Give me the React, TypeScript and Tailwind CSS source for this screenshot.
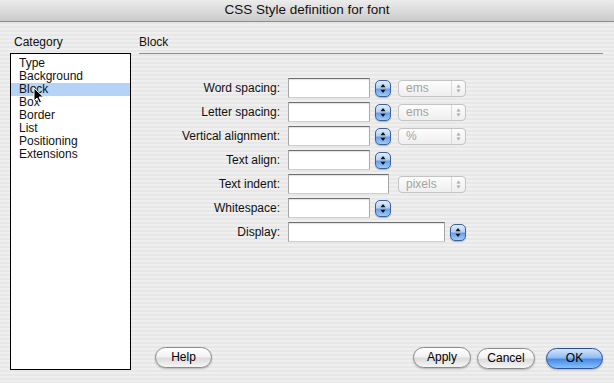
const font = "font-['Liberation_Sans',Arial,sans-serif]";

function Stepper() {
  return (
    <div className="flex h-[17px] w-[16px] items-center justify-center rounded-[5px] border border-[#3d5f9a] bg-[linear-gradient(180deg,#e2edfb_0%,#b3d0f4_45%,#6aa0e8_55%,#9ccaf8_100%)] shadow-[0_1px_1px_rgba(0,0,0,0.25)]">
      <svg width="6" height="11" viewBox="0 0 6 11">
        <path d="M3 1 L5.5 4.2 L0.5 4.2 Z" fill="#111" />
        <path d="M3 10 L5.5 6.8 L0.5 6.8 Z" fill="#111" />
      </svg>
    </div>
  );
}

function UnitSelect({ value }: { value: string }) {
  return (
    <div className="flex h-[17px] w-[68px] items-center rounded-[4px] border border-[#c4c4c4] bg-[linear-gradient(180deg,#fdfdfd,#eeeeee)]">
      <span className="flex-1 pl-[7px] text-[12px] leading-none text-[#a3a3a3]">{value}</span>
      <span className="flex h-full w-[14px] items-center justify-center border-l border-[#dadada]">
        <svg width="5" height="9" viewBox="0 0 5 9">
          <path d="M2.5 0.5 L4.5 3.5 L0.5 3.5 Z" fill="#a8a8a8" />
          <path d="M2.5 8.5 L4.5 5.5 L0.5 5.5 Z" fill="#a8a8a8" />
        </svg>
      </span>
    </div>
  );
}

function TextBox({ width }: { width: string }) {
  return (
    <div
      className={`h-[20px] ${width} border border-[#a9a9a9] border-t-[#6f6f6f] border-b-[#cfcfcf] bg-white shadow-[inset_0_1px_1px_rgba(0,0,0,0.12)]`}
    />
  );
}

function Row({ label, children }: { label: string; children: React.ReactNode }) {
  return (
    <div className="flex h-[24px] items-center">
      <span className="w-[142px] pr-[1px] text-right text-[12px] text-[#111]">{label}</span>
      <div className="ml-[7px] flex items-center">{children}</div>
    </div>
  );
}

function AquaButton({ label, width, primary }: { label: string; width: string; primary?: boolean }) {
  return (
    <button
      type="button"
      className={`h-[21px] ${width} rounded-full border text-[12px] leading-none text-black shadow-[0_1px_2px_rgba(0,0,0,0.25)] ${
        primary
          ? "border-[#2d4f93] bg-[linear-gradient(180deg,#d4e5fb_0%,#92bdf3_45%,#4a8be6_55%,#86c0fb_100%)]"
          : "border-[#8a8a8a] bg-[linear-gradient(180deg,#ffffff_0%,#f2f2f2_45%,#dcdcdc_55%,#f6f6f6_100%)]"
      }`}
    >
      {label}
    </button>
  );
}

const categories = ["Type", "Background", "Block", "Box", "Border", "List", "Positioning", "Extensions"];

export default function App() {
  return (
    <div className={`h-[383px] w-[614px] overflow-hidden ${font} bg-[repeating-linear-gradient(180deg,#efefef_0px,#efefef_2px,#e7e7e7_2px,#e7e7e7_4px)]`}>
      <div className="flex h-[22px] items-center justify-center border-b border-[#8c8c8c] bg-[linear-gradient(180deg,#ececec,#cbcbcb)] text-[13.5px] text-[#111]">
        CSS Style definition for font
      </div>

      <div className="flex h-[361px] pl-[10px] pr-[11px]">
        <div className="flex w-[121px] flex-col pb-[13px]">
          <div className="h-[31px] pl-[4px] pt-[13px] text-[12px] leading-[14px] text-[#111]">Category</div>
          <div className="relative flex-1 border border-black bg-white pt-[3px]">
            {categories.map((c) => (
              <div
                key={c}
                className={`h-[13px] pl-[8px] text-[12px] leading-[13px] text-[#111] ${c === "Block" ? "bg-[#b5d3f7]" : ""}`}
              >
                {c}
              </div>
            ))}
            <svg className="absolute left-[22px] top-[33px]" width="12" height="17" viewBox="0 0 12 17">
              <path d="M1 1 L1 14 L4 11 L6.5 16 L8.5 15 L6 10 L10.5 10 Z" fill="#000" stroke="#fff" strokeWidth="1" />
            </svg>
          </div>
        </div>

        <div className="ml-[8px] flex flex-1 flex-col pb-[14px]">
          <div className="h-[31px] pt-[13px] text-[12px] leading-[14px] text-[#111]">Block</div>
          <div className="h-[2px] border-t border-[#8e8e8e] border-b-[#f8f8f8]" />
          <div className="mt-[21px] flex flex-col">
            <Row label="Word spacing:">
              <TextBox width="w-[82px]" />
              <div className="ml-[5px]"><Stepper /></div>
              <div className="ml-[7px]"><UnitSelect value="ems" /></div>
            </Row>
            <Row label="Letter spacing:">
              <TextBox width="w-[82px]" />
              <div className="ml-[5px]"><Stepper /></div>
              <div className="ml-[7px]"><UnitSelect value="ems" /></div>
            </Row>
            <Row label="Vertical alignment:">
              <TextBox width="w-[82px]" />
              <div className="ml-[5px]"><Stepper /></div>
              <div className="ml-[7px]"><UnitSelect value="%" /></div>
            </Row>
            <Row label="Text align:">
              <TextBox width="w-[82px]" />
              <div className="ml-[5px]"><Stepper /></div>
            </Row>
            <Row label="Text indent:">
              <TextBox width="w-[101px]" />
              <div className="ml-[9px]"><UnitSelect value="pixels" /></div>
            </Row>
            <Row label="Whitespace:">
              <TextBox width="w-[82px]" />
              <div className="ml-[5px]"><Stepper /></div>
            </Row>
            <Row label="Display:">
              <TextBox width="w-[157px]" />
              <div className="ml-[5px]"><Stepper /></div>
            </Row>
          </div>

          <div className="mt-auto flex items-center pl-[16px]">
            <AquaButton label="Help" width="w-[57px]" />
            <div className="ml-auto flex items-center">
              <AquaButton label="Apply" width="w-[58px]" />
              <div className="ml-[6px]"><AquaButton label="Cancel" width="w-[58px]" /></div>
              <div className="ml-[11px]"><AquaButton label="OK" width="w-[57px]" primary /></div>
            </div>
          </div>
        </div>
      </div>
    </div>
  );
}
